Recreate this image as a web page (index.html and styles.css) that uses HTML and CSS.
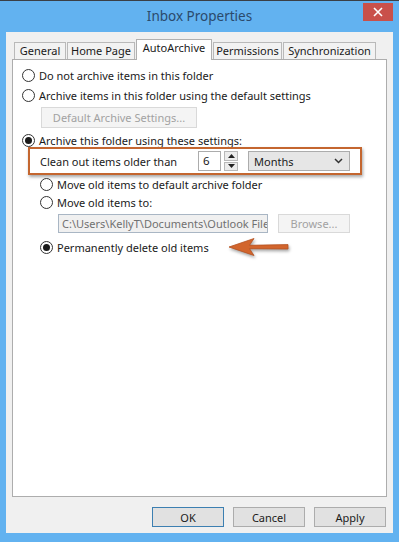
FILE: index.html
```html
<!DOCTYPE html>
<html>
<head>
<meta charset="utf-8">
<link rel="stylesheet" href="styles.css">
</head>
<body>
<div class="window">
  <div class="titlebar">
    <span></span>
    <div class="title">Inbox Properties</div>
    <div class="close">
      <svg width="10" height="10" viewBox="0 0 10 10"><path d="M1 1L9 9M9 1L1 9" stroke="#fff" stroke-width="1.6" fill="none"/></svg>
    </div>
  </div>
  <div class="client">
    <div class="tabs">
      <div class="tab t-general">General</div>
      <div class="tab t-home">Home Page</div>
      <div class="tab t-auto selected">AutoArchive</div>
      <div class="tab t-perm">Permissions</div>
      <div class="tab t-sync">Synchronization</div>
    </div>
    <div class="panel">
      <div class="opt"><span class="radio"></span>Do not archive items in this folder</div>
      <div class="opt r2"><span class="radio"></span>Archive items in this folder using the default settings</div>
      <div class="btn disabled default-btn">Default Archive Settings...</div>
      <div class="opt r3"><span class="radio checked"></span>Archive this folder using these settings:</div>
      <div class="highlight">
        <span class="clean-label">Clean out items older than</span>
        <div class="spin-input">6</div>
        <div class="spin-btns">
          <div class="spin-half"><svg width="7" height="4" viewBox="0 0 7 4"><path d="M0 4L3.5 0L7 4Z" fill="#222"/></svg></div>
          <div class="spin-half"><svg width="7" height="4" viewBox="0 0 7 4"><path d="M0 0L3.5 4L7 0Z" fill="#222"/></svg></div>
        </div>
        <div class="select">
          <span>Months</span>
          <svg width="9" height="6" viewBox="0 0 9 6"><path d="M1 1L4.5 4.5L8 1" stroke="#333" stroke-width="1.5" fill="none"/></svg>
        </div>
      </div>
      <div class="opt sub"><span class="radio"></span>Move old items to default archive folder</div>
      <div class="opt sub"><span class="radio"></span>Move old items to:</div>
      <div class="path-row">
        <div class="path-input">C:\Users\KellyT\Documents\Outlook File</div>
        <div class="btn disabled browse">Browse...</div>
      </div>
      <div class="opt sub perm"><span class="radio checked"></span><span class="perm-label">Permanently delete old items</span><svg class="arrow" width="64" height="22" viewBox="0 0 64 22"><path d="M2 11L27 2.5L22.5 9.3L61 8.6L61 13L22.5 12.7L27 19.5Z" fill="#d2652d" stroke="#b5501f" stroke-width="0.8" stroke-linejoin="round"/></svg></div>
    </div>
    <div class="actions">
      <div class="btn ok">OK</div>
      <div class="btn">Cancel</div>
      <div class="btn">Apply</div>
    </div>
  </div>
</div>
</body>
</html>
```

FILE: styles.css
```css
html, body {
  margin: 0;
  padding: 0;
}
body {
  width: 399px;
  height: 542px;
  overflow: hidden;
  font-family: "Noto Sans", "Open Sans", sans-serif;
  font-size: 11px;
  color: #1a1a1a;
}
.window {
  box-sizing: border-box;
  width: 399px;
  height: 542px;
  background: #62b2f0;
  border-top: 1px solid #3a3f46;
  padding: 0 6px 9px 6px;
  display: flex;
  flex-direction: column;
}
.titlebar {
  height: 31px;
  display: grid;
  grid-template-columns: 1fr auto 1fr;
  align-items: start;
}
.title {
  font-size: 13.5px;
  color: #2b4a6c;
  padding-top: 6px;
}
.close {
  justify-self: end;
  margin-top: 2px;
  width: 30px;
  height: 18px;
  background: #c9504a;
  display: flex;
  align-items: center;
  justify-content: center;
}
.client {
  flex: 1;
  background: #f0f0f0;
  padding: 7px 6px 0 6px;
  display: flex;
  flex-direction: column;
}
.tabs {
  display: flex;
  align-items: flex-end;
  height: 20px;
  padding-left: 2px;
}
.tab {
  box-sizing: border-box;
  height: 17px;
  border: 1px solid #b9b9b9;
  border-bottom: none;
  background: #f2f2f2;
  text-align: center;
  line-height: 16px;
  white-space: nowrap;
  margin-right: 1px;
}
.t-general { width: 52px; }
.t-home { width: 68px; }
.t-auto { width: 76px; }
.t-perm { width: 69px; }
.t-sync { width: 93px; }
.tab.selected {
  height: 21px;
  margin-bottom: -1px;
  background: #fff;
  position: relative;
  z-index: 1;
  line-height: 16px;
  border-color: #b0b0b0;
}
.panel {
  box-sizing: border-box;
  height: 438px;
  background: #fff;
  border: 1px solid #adadad;
  padding: 6px 0 0 9px;
  display: flex;
  flex-direction: column;
  align-items: flex-start;
}
.opt {
  height: 18px;
  display: flex;
  align-items: center;
  gap: 4px;
  white-space: nowrap;
}
.r2 { margin-top: 2px; }
.r3 { margin-top: 3px; }
.radio {
  box-sizing: border-box;
  width: 13px;
  height: 13px;
  border: 1px solid #333;
  border-radius: 50%;
  background: #fff;
  display: inline-flex;
  align-items: center;
  justify-content: center;
  flex: none;
}
.radio.checked::after {
  content: "";
  width: 7px;
  height: 7px;
  border-radius: 50%;
  background: #1a1a1a;
}
.btn {
  box-sizing: border-box;
  height: 20px;
  width: 72px;
  border: 1px solid #acacac;
  background: #e1e1e1;
  display: flex;
  align-items: center;
  justify-content: center;
  white-space: nowrap;
}
.btn.disabled {
  background: #f4f4f4;
  border-color: #d9d9d9;
  color: #a2a2a2;
}
.default-btn {
  margin-top: 3px;
  margin-left: 19px;
  width: 156px;
  height: 21px;
}
.highlight {
  box-sizing: border-box;
  margin-top: -2px;
  margin-left: 6px;
  width: 334px;
  height: 28px;
  border: 2px solid #c4662f;
  box-shadow: 1px 2px 3px rgba(0,0,0,0.35);
  background: #fff;
  padding-left: 10px;
  display: flex;
  align-items: center;
}
.clean-label {
  width: 158px;
  flex: none;
  white-space: nowrap;
}
.spin-input {
  box-sizing: border-box;
  width: 23px;
  height: 20px;
  border: 1px solid #acacac;
  padding-left: 4px;
  line-height: 17px;
  font-size: 11.5px;
}
.spin-btns {
  margin-left: 3px;
  width: 14px;
  height: 20px;
  display: flex;
  flex-direction: column;
  gap: 1px;
}
.spin-half {
  box-sizing: border-box;
  flex: 1;
  border: 1px solid #b8b8b8;
  background: #ececec;
  display: flex;
  align-items: center;
  justify-content: center;
}
.select {
  box-sizing: border-box;
  margin-left: 10px;
  width: 102px;
  height: 20px;
  border: 1px solid #acacac;
  background: #e6e6e6;
  display: flex;
  align-items: center;
  justify-content: space-between;
  padding: 0 6px 0 5px;
}
.sub { margin-left: 18px; }
.path-row {
  margin-top: 3px;
  margin-left: 36px;
  display: flex;
  gap: 10px;
}
.path-input {
  box-sizing: border-box;
  width: 210px;
  height: 19px;
  border: 1px solid #a9b6c4;
  background: #f0f0f0;
  color: #707070;
  padding-left: 3px;
  line-height: 17px;
  white-space: nowrap;
  overflow: hidden;
}
.browse {
  width: 72px;
  height: 19px;
}
.perm { margin-top: 5px; }
.perm-label {
  width: 166px;
  flex: none;
}
.arrow {
  flex: none;
  filter: drop-shadow(1px 2px 1.5px rgba(0,0,0,0.35));
}
.actions {
  margin-top: 10px;
  display: flex;
  justify-content: flex-end;
  gap: 9px;
  padding-right: 1px;
}
.btn.ok {
  border-color: #3c7fb1;
}
```
